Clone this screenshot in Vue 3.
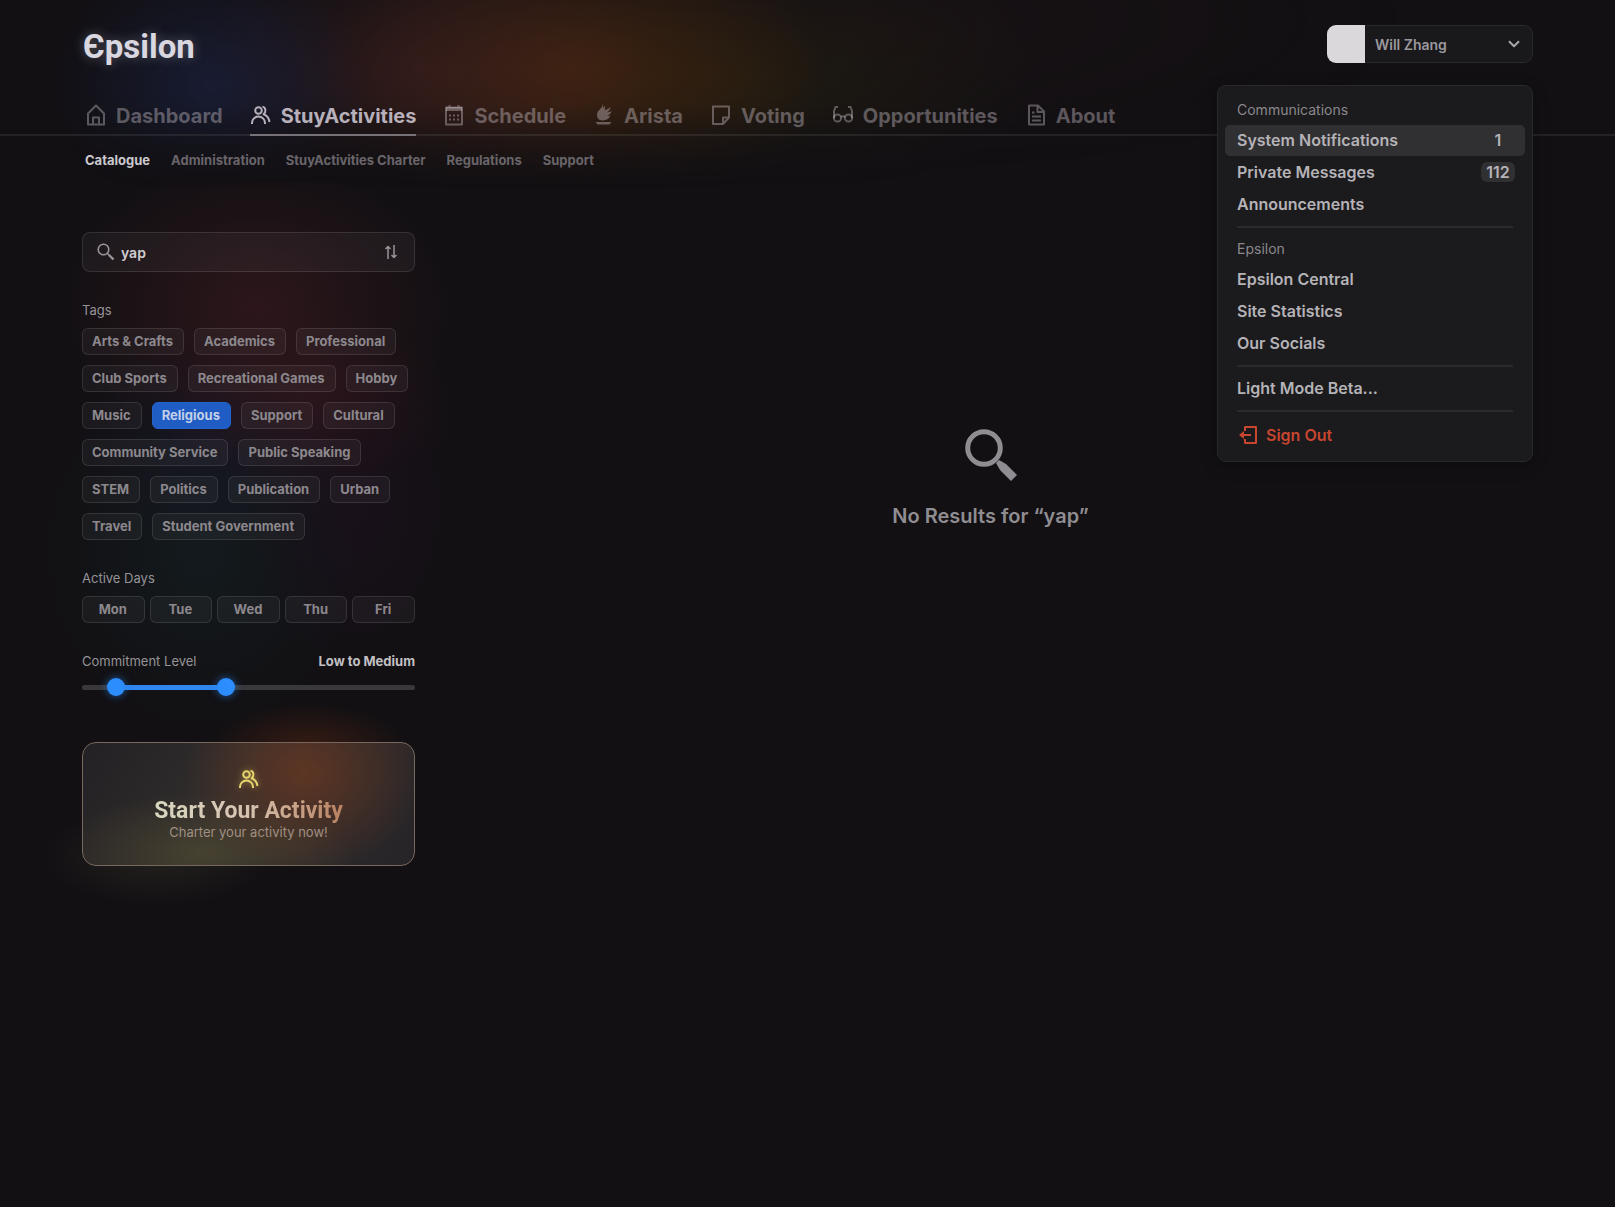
<template>
  <div class="page">
    <header class="site-header">
      <div class="top-bar">
        <a href="#" class="logo" aria-label="Epsilon">Єpsilon</a>

        <div class="account">
          <button class="account-btn" type="button" :aria-expanded="menuOpen" @click="menuOpen = !menuOpen">
            <span class="avatar"></span>
            <span class="account-name">Will Zhang</span>
            <svg class="chevron" viewBox="0 0 12 8"><path d="M1 1.2l5 5 5-5" /></svg>
          </button>

          <div v-if="menuOpen" class="menu">
            <section v-for="(group, i) in menuGroups" :key="i" class="menu-group">
              <h2 v-if="group.title" class="menu-title">{{ group.title }}</h2>
              <a
                v-for="item in group.items"
                :key="item.label"
                href="#"
                class="menu-item"
                :class="{ hovered: item.hovered }"
              >
                {{ item.label }}
                <span v-if="item.count" class="badge">{{ item.count }}</span>
              </a>
            </section>
            <section class="menu-group">
              <button type="button" class="menu-item sign-out">
                <svg viewBox="0 0 20 20"><path d="M7 6V2h11v16H7v-4M13 10H3" /><path class="solid" d="M1 10l5-4v8z" /></svg>
                Sign Out
              </button>
            </section>
          </div>
        </div>
      </div>

      <nav class="main-nav">
        <a
          v-for="link in links"
          :key="link.label"
          href="#"
          class="nav-link"
          :class="{ active: link.label === 'StuyActivities' }"
        >
          <svg viewBox="0 0 22 22" v-html="link.icon"></svg>
          <span>{{ link.label }}</span>
        </a>
      </nav>
    </header>

    <nav class="sub-nav">
      <a v-for="(link, i) in subLinks" :key="link" href="#" :class="{ active: i === 0 }">{{ link }}</a>
    </nav>

    <div class="content">
      <aside class="filters">
        <div class="search">
          <svg class="search-icon" viewBox="0 0 18 18">
            <circle cx="6.5" cy="6.5" r="5.3" />
            <path d="M10.5 10.5l2 2" />
            <path class="handle" d="M12 12l4.5 4.5" />
          </svg>
          <input v-model="query" type="text" aria-label="Search activities" />
          <button type="button" class="sort" aria-label="Sort">
            <svg viewBox="0 0 14 14"><path d="M4 14V1.500M1.500 4L4 1.500 6.500 4M10 0v12.500M7.500 10l2.500 2.500L12.500 10" /></svg>
          </button>
        </div>

        <section>
          <h3 class="label">Tags</h3>
          <div class="tags">
            <button
              v-for="tag in tags"
              :key="tag"
              type="button"
              class="chip"
              :class="{ selected: tag === selectedTag }"
              @click="selectedTag = tag"
            >{{ tag }}</button>
          </div>
        </section>

        <section>
          <h3 class="label">Active Days</h3>
          <div class="days">
            <button v-for="day in days" :key="day" type="button" class="chip">{{ day }}</button>
          </div>
        </section>

        <section>
          <div class="level-head">
            <h3 class="label">Commitment Level</h3>
            <strong>Low to Medium</strong>
          </div>
          <div class="slider">
            <div class="track">
              <div class="fill" :style="{ marginLeft: low + 2 + '%', width: high - low + '%' }"></div>
            </div>
            <input v-model.number="low" type="range" min="0" max="100" aria-label="Minimum commitment" />
            <input v-model.number="high" type="range" min="0" max="100" aria-label="Maximum commitment" />
          </div>
        </section>

        <a href="#" class="charter">
          <svg viewBox="0 0 22 22" v-html="people"></svg>
          <span class="charter-title">Start Your Activity</span>
          <span class="charter-text">Charter your activity now!</span>
        </a>
      </aside>

      <main class="results">
        <svg viewBox="0 0 52 52">
          <circle cx="19" cy="19" r="16.300" />
          <path d="M31 34l3-3 7 4 11 11-6 6-11-11z" />
        </svg>
        <p>No Results for “{{ query }}”</p>
      </main>
    </div>
  </div>
</template>

<script setup>
import { ref } from 'vue'

const menuOpen = ref(true)
const query = ref('yap')
const selectedTag = ref('Religious')
const low = ref(8)
const high = ref(43)

const people =
  '<circle cx="8.500" cy="6.500" r="3.300"/><path d="M2 20v-1a6.500 6.500 0 0 1 13 0v1"/><path d="M12.500 2.600c3.400.8 4 5.200 1 7.600 3.300 1.200 5.500 3.900 6 7.800"/>'

const links = [
  { label: 'Dashboard', icon: '<path d="M3 20.500V9.500l8-8 8 8v11zM8 20.500v-7h6v7"/>' },
  { label: 'StuyActivities', icon: people },
  {
    label: 'Schedule',
    icon: '<path d="M3 3.500h16v17H3zM6.500 1v3M15.500 1v3"/><path class="solid" d="M3 3h16v4H3z"/><path stroke-dasharray="2 2" d="M6 11.500h10M6 15.500h10"/>'
  },
  {
    label: 'Arista',
    icon: '<path class="solid" d="M9.500 0c1 1.500.8 3 .3 4.500L12 2c.3 1.500 0 2.800-.5 4 2-.2 4-1.300 6-3-.2 2.500-1.300 4-3.500 5.300 1.500.1 3-.3 4.500-1.300-.6 2.500-2 4-4.200 4.800 1.200.2 2.200 0 3.200-.5-1 3-4 5.200-7.500 5.200-3.800 0-6-2.200-6-5.500 0-3 1.600-4.300 3.300-6C9 3.500 9.500 2 9.500 0z"/><path class="solid" d="M2.500 18h16l-2 2.500h-12z"/>'
  },
  { label: 'Voting', icon: '<path d="M3 2.500h16v11l-6 6.500H3zM13 20v-6.500h6"/>' },
  {
    label: 'Opportunities',
    icon: '<circle cx="5.500" cy="14" r="3.600"/><circle cx="16.500" cy="14" r="3.600"/><path d="M9 13q2-1.500 4 0M2 14V7l1.500-4H6M20 14V7l-1.500-4H16"/>'
  },
  {
    label: 'About',
    icon: '<path d="M4 1.500h9l6 6v13H4zM12.500 2v6H19M7 8.500h2.500M7 12.500h9M7 16.500h9"/>'
  }
]

const subLinks = ['Catalogue', 'Administration', 'StuyActivities Charter', 'Regulations', 'Support']

const tags = [
  'Arts & Crafts', 'Academics', 'Professional', 'Club Sports', 'Recreational Games', 'Hobby',
  'Music', 'Religious', 'Support', 'Cultural', 'Community Service', 'Public Speaking',
  'STEM', 'Politics', 'Publication', 'Urban', 'Travel', 'Student Government'
]

const days = ['Mon', 'Tue', 'Wed', 'Thu', 'Fri']

const menuGroups = [
  {
    title: 'Communications',
    items: [
      { label: 'System Notifications', count: 1, hovered: true },
      { label: 'Private Messages', count: 112 },
      { label: 'Announcements' }
    ]
  },
  {
    title: 'Epsilon',
    items: [{ label: 'Epsilon Central' }, { label: 'Site Statistics' }, { label: 'Our Socials' }]
  },
  { items: [{ label: 'Light Mode Beta...' }] }
]
</script>

<style>
body { margin: 0; background: #121013; }
</style>

<style scoped>
* { box-sizing: border-box; }
a { color: inherit; text-decoration: none; }
button { font: inherit; color: inherit; cursor: pointer; }
h2, h3, p { margin: 0; font-weight: 400; }
svg { fill: none; stroke: currentColor; stroke-width: 2; stroke-linejoin: round; flex-shrink: 0; }
svg :deep(.solid) { fill: currentColor; stroke: none; }

.page {
  position: relative;
  min-height: 100vh;
  font-family: Inter, "Liberation Sans", sans-serif;
  font-size: 13px;
  color: #8d8b8f;
  background: #121013;
}

/* aurora glow behind the header */
.page::before {
  content: "";
  position: absolute;
  inset: 0 0 auto;
  height: 210px;
  background:
    radial-gradient(ellipse 160px 130px at 210px 85px, rgba(28, 38, 76, 0.55), transparent),
    radial-gradient(ellipse 240px 140px at 420px 70px, rgba(76, 36, 38, 0.4), transparent),
    radial-gradient(ellipse 260px 150px at 570px 70px, rgba(92, 46, 14, 0.55), transparent),
    radial-gradient(ellipse 300px 120px at 740px 80px, rgba(44, 40, 14, 0.4), transparent),
    radial-gradient(ellipse 500px 150px at 900px 20px, rgba(34, 20, 22, 0.35), transparent);
  mask-image: linear-gradient(#000 50%, transparent 90%);
}

/* header */
.site-header { position: relative; z-index: 2; padding-top: 25px; border-bottom: 2px solid rgba(255, 255, 255, 0.08); }
.top-bar { display: flex; justify-content: space-between; height: 68px; padding: 0 82px; }
.logo { padding-left: 1px; font-family: Roboto, sans-serif; font-size: 33px; line-height: 44px; font-weight: 700; color: #d9d7e0; text-shadow: 0 0 12px rgba(217, 215, 224, 0.35); }

.account { position: relative; width: 206px; }
.account-btn { display: flex; align-items: center; width: 100%; height: 38px; padding: 0 13px 0 0; overflow: hidden; border: 0; border-radius: 9px; background: #19181b; box-shadow: inset 0 0 0 1px #29282b; }
.avatar { width: 38px; height: 38px; background: #dad8db; }
.account-name { flex: 1; margin-left: 10px; text-align: left; font-size: 14px; font-weight: 600; color: #9b999d; }
.chevron { width: 12px; height: 8px; color: #a9a7ab; }

.menu { position: absolute; top: 60px; right: 0; width: 316px; padding: 9px 7px 8px; border: 1px solid #29282b; border-radius: 9px; background: #1b1a1d; box-shadow: 0 4px 16px rgba(0, 0, 0, 0.3); }
.menu-group { display: grid; row-gap: 1px; }
.menu-group + .menu-group { margin-top: 6px; }
.menu-group + .menu-group::before { content: ""; height: 2px; margin: 0 12px 5px; background: #2a292c; }
.menu-title { padding: 1px 12px 0; font-size: 14px; line-height: 28px; color: #8a888c; }
.menu-item { display: flex; align-items: center; width: 100%; height: 31px; padding: 0 10px 2px 12px; border: 0; border-radius: 5px; background: none; font-size: 16px; font-weight: 600; color: #b5b3b7; }
.menu-item.hovered { background: #302f32; }
.badge { min-width: 34px; margin-left: auto; border-radius: 6px; background: #302f32; text-align: center; line-height: 20px; }
.sign-out { gap: 7px; height: 35px; color: #c8452f; }
.sign-out svg { width: 22px; height: 20px; }

.main-nav { display: flex; gap: 27px; height: 41px; padding: 0 85px; color: rgba(235, 225, 235, 0.34); }
.nav-link { display: flex; gap: 9px; height: 43px; padding-top: 3px; border-bottom: 2px solid transparent; font-size: 20px; line-height: 40px; font-weight: 700; }
.nav-link svg { width: 22px; height: 22px; margin-top: 8px; }
.nav-link.active { border-color: #777178; color: #b8b0ba; }

.sub-nav { position: relative; display: flex; gap: 21px; padding: 14px 85px 0; line-height: 20px; font-weight: 700; color: #69656a; }
.sub-nav .active { color: #cccace; }

/* catalogue */
.content { position: relative; display: grid; grid-template-columns: 333px 1fr; gap: 33px; padding: 62px 82px 60px; }
.filters { position: relative; z-index: 0; display: flex; flex-direction: column; gap: 28px; }
.filters::before {
  content: "";
  position: absolute;
  z-index: -1;
  inset: -50px -50px auto;
  height: 560px;
  background:
    radial-gradient(ellipse 200px 150px at 225px 125px, rgba(62, 26, 32, 0.6), transparent),
    radial-gradient(ellipse 150px 90px at 280px 220px, rgba(66, 24, 32, 0.35), transparent),
    radial-gradient(ellipse 110px 170px at 320px 320px, rgba(42, 16, 44, 0.3), transparent),
    radial-gradient(ellipse 140px 110px at 180px 260px, rgba(28, 26, 54, 0.35), transparent),
    radial-gradient(ellipse 160px 180px at 170px 370px, rgba(20, 36, 40, 0.5), transparent);
}

.search { display: flex; align-items: center; height: 40px; padding: 0 14px; border: 1px solid rgba(255, 255, 255, 0.11); border-radius: 8px; background: rgba(255, 255, 255, 0.04); }
.search-icon { width: 18px; height: 18px; color: #99949a; stroke-width: 1.6; }
.search-icon .handle { stroke-width: 2.4; }
.search input { flex: 1; min-width: 0; padding: 0 6px; border: 0; outline: 0; background: none; font: 600 14px Inter, sans-serif; color: #d0ccd1; }
.sort { display: flex; padding: 2px; border: 0; background: none; color: #9a959b; }
.sort svg { width: 14px; height: 14px; stroke-width: 1.5; }

.label { font-size: 13px; line-height: 20px; color: #969397; }
.tags { display: flex; flex-wrap: wrap; gap: 10px; margin-top: 8px; }
.days { display: grid; grid-template-columns: repeat(5, 1fr); gap: 5px; margin-top: 8px; }
.chip { height: 27px; padding: 0 10px 1px 9px; border: 1px solid rgba(255, 255, 255, 0.11); border-radius: 6px; background: rgba(255, 255, 255, 0.04); font-weight: 700; line-height: 24px; color: #8c888d; }
.chip.selected { border-color: #2363cf; background: #1f5cc4; color: #c3cfe9; }

.level-head { display: flex; justify-content: space-between; line-height: 20px; }
.level-head strong { font-weight: 700; color: #c2c0c4; }
.slider { position: relative; height: 18px; margin-top: 7px; }
.track { height: 18px; padding: 7px 0 6px; }
.track::before { content: ""; display: block; height: 5px; border-radius: 3px; background: #39383b; }
.fill { height: 5px; margin-top: -5px; background: #2f86ee; }
.slider input { position: absolute; inset: 0; width: 100%; height: 18px; margin: 0; appearance: none; background: none; pointer-events: none; }
.slider input::-webkit-slider-thumb { appearance: none; width: 18px; height: 18px; border-radius: 50%; background: #2c8dff; box-shadow: 0 0 8px rgba(44, 141, 255, 0.6); pointer-events: auto; }

.charter {
  position: relative;
  display: flex;
  flex-direction: column;
  align-items: center;
  height: 124px;
  margin-top: 18px;
  padding-top: 25px;
  border: 1px solid #78675c;
  border-radius: 14px;
  background:
    radial-gradient(ellipse 120px 100px at 222px 30px, rgba(124, 60, 30, 0.6), transparent),
    radial-gradient(ellipse 150px 60px at 120px 110px, rgba(90, 84, 50, 0.5), transparent),
    linear-gradient(120deg, #232124, #322e2d 45%, #262428);
}
/* colour spilling out past the card edges */
.charter::before {
  content: "";
  position: absolute;
  z-index: -1;
  inset: -45px;
  background:
    radial-gradient(ellipse 100px 45px at 270px 50px, rgba(110, 44, 18, 0.4), transparent),
    radial-gradient(ellipse 115px 50px at 120px 158px, rgba(66, 66, 48, 0.35), transparent);
}
.charter svg { width: 22px; height: 22px; color: #e8d56c; filter: drop-shadow(0 0 3px rgba(232, 213, 108, 0.5)); }
.charter-title { margin-top: 7px; font-family: Roboto, sans-serif; font-size: 23px; line-height: 28px; font-weight: 700; color: transparent; background: linear-gradient(90deg, #d9d6c0, #d6c2b0 50%, #b98260); background-clip: text; }
.charter-text { line-height: 14px; color: #a08f82; }

.results { display: flex; flex-direction: column; align-items: center; padding-top: 197px; color: #8f8d91; }
.results svg { width: 52px; height: 52px; stroke-width: 5; }
.results path { fill: currentColor; stroke: none; }
.results p { margin-top: 21px; font-size: 20px; line-height: 28px; font-weight: 600; }
</style>
